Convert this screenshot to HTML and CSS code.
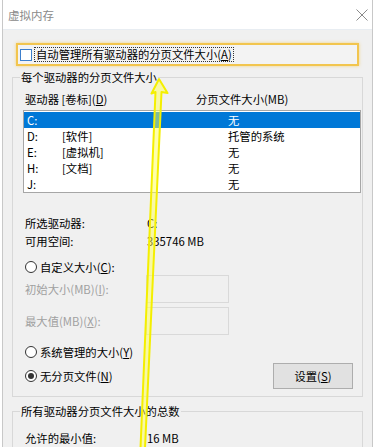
FILE: index.html
```html
<!DOCTYPE html>
<html lang="zh-CN">
<head>
    <meta charset="UTF-8">
    <title>虚拟内存</title>
    <link rel="stylesheet" href="styles.css">
</head>
<body>
<div class="window">
    <div class="titlebar">
        <span class="title">虚拟内存</span>
        <svg class="close" width="12" height="12" viewBox="0 0 12 12">
            <path d="M0.5 0.5 L11.5 11.5 M11.5 0.5 L0.5 11.5" stroke="#8a8a8a" stroke-width="1" fill="none"/>
        </svg>
    </div>

    <div class="content">
        <!-- auto manage checkbox (highlighted) -->
        <div class="auto-row">
            <span class="checkbox"></span>
            <span class="focus">自动管理所有驱动器的分页文件大小(<u>A</u>)</span>
        </div>

        <fieldset class="group">
            <legend>每个驱动器的分页文件大小</legend>
            <div class="list-head">
                <span class="head-drive">驱动器 [卷标](<u>D</u>)</span>
                <span>分页文件大小(MB)</span>
            </div>
            <div class="listbox">
                <div class="row selected"><span>C:</span><span></span><span>无</span></div>
                <div class="row"><span>D:</span><span>[软件]</span><span>托管的系统</span></div>
                <div class="row"><span>E:</span><span>[虚拟机]</span><span>无</span></div>
                <div class="row"><span>H:</span><span>[文档]</span><span>无</span></div>
                <div class="row"><span>J:</span><span></span><span>无</span></div>
            </div>

            <div class="info">
                <div class="info-row"><span class="info-label">所选驱动器:</span><span>C:</span></div>
                <div class="info-row"><span class="info-label">可用空间:</span><span>335746 MB</span></div>
            </div>

            <div class="radio-row custom"><span class="radio"></span>自定义大小(<u>C</u>):</div>
            <div class="field-row"><span class="field-label">初始大小(MB)(<u>I</u>):</span><span class="input"></span></div>
            <div class="field-row second"><span class="field-label">最大值(MB)(<u>X</u>):</span><span class="input"></span></div>
            <div class="radio-row system"><span class="radio"></span>系统管理的大小(<u>Y</u>)</div>
            <div class="radio-row none">
                <span class="radio checked"></span>无分页文件(<u>N</u>)
                <button class="set-btn">设置(<u>S</u>)</button>
            </div>
        </fieldset>

        <fieldset class="group total">
            <legend>所有驱动器分页文件大小的总数</legend>
            <div class="info-row"><span class="info-label">允许的最小值:</span><span>16 MB</span></div>
        </fieldset>
    </div>
</div>

<!-- yellow annotation arrow drawn over the dialog -->
<svg class="arrow" width="376" height="447" viewBox="0 0 376 447">
    <polygon points="159,79 151.5,93.5 155.5,92 140.5,448 145,448 161.5,92 167.5,93"
             fill="rgba(255,255,90,0.5)" stroke="#f4ef00" stroke-width="2" stroke-linejoin="round"/>
</svg>
</body>
</html>
```

FILE: styles.css
```css
* {
    box-sizing: border-box;
}

html, body {
    margin: 0;
    padding: 0;
    background: #fff;
    overflow: hidden;
}

body {
    font-family: "Noto Sans CJK SC", "Noto Sans", sans-serif;
    font-size: 11.33px;
    color: #000;
    width: 376px;
    height: 447px;
}

u {
    text-decoration: underline;
    text-underline-offset: 1px;
}

/* window frame */
.window {
    margin-left: 2px;
    width: 371px;
    height: 447px;
    overflow: hidden;
    border-left: 1px solid #c8c8c8;
    border-right: 1px solid #c8c8c8;
    background: #f0f0f0;
}

.titlebar {
    height: 30px;
    background: #fff;
    display: flex;
    align-items: center;
    justify-content: space-between;
    border-bottom: 1px solid #e8edf2;
}
.titlebar .title {
    padding-left: 5px;
    color: #8a8a8a;
    font-size: 11.5px;
    line-height: 14px;
}
.titlebar .close {
    margin-right: 4px;
}

.content {
    padding-top: 13px;
}

/* auto manage row */
.auto-row {
    margin-left: 13px;
    width: 343px;
    height: 23px;
    border: 2px solid #f2c54e;
    box-shadow: 0 0 3px rgba(245, 200, 80, 0.7);
    background: #f3f3f3;
    display: flex;
    align-items: center;
    padding-left: 2px;
}
.checkbox {
    width: 12px;
    height: 12px;
    border: 1px solid #3d7fcc;
    background: #fff;
    flex: none;
}
.focus {
    margin-left: 2px;
    border: 1px dotted #333;
    padding: 0 1px;
    line-height: 13px;
}

/* group boxes */
.group {
    margin: 4px 0 0 9px;
    width: 351px;
    border: 1px solid #d8d8d8;
    padding: 0 1px 7px 10px;
    min-inline-size: 0;
}
.group legend {
    padding: 0 1px;
    margin-left: -3px;
    line-height: 14px;
}

.list-head {
    margin-top: 8px;
    padding-left: 2px;
    line-height: 14px;
    display: flex;
}
.head-drive {
    width: 171px;
}

.listbox {
    margin-top: 4px;
    width: 338px;
    height: 83px;
    border: 1px solid #a6a6a6;
    background: #fff;
    padding-top: 1px;
}
.row {
    height: 16px;
    line-height: 16px;
    display: grid;
    grid-template-columns: 35px 166px 1fr;
    padding-left: 3px;
}
.row.selected {
    background: #0078d7;
    color: #fff;
}

.info {
    margin-top: 21px;
}
.info-row {
    display: flex;
    line-height: 18px;
    padding-left: 2px;
}
.info-label {
    width: 122px;
}

.radio-row {
    display: flex;
    align-items: center;
    padding-left: 2px;
    height: 16px;
}
.radio {
    width: 12px;
    height: 12px;
    border: 1px solid #333;
    border-radius: 50%;
    background: #fff;
    margin-right: 3px;
    flex: none;
    display: flex;
    align-items: center;
    justify-content: center;
}
.radio.checked::after {
    content: "";
    width: 6px;
    height: 6px;
    border-radius: 50%;
    background: #333;
}
.radio-row.custom {
    margin-top: 9px;
}
.radio-row.system {
    margin-top: 9px;
}
.radio-row.none {
    margin-top: 3px;
    height: 26px;
}

.field-row {
    display: flex;
    align-items: center;
    height: 28px;
    padding-left: 2px;
    color: #a0a0a0;
}
.field-row.second {
    margin-top: 4px;
}
.field-label {
    width: 121px;
}
.input {
    width: 83px;
    height: 28px;
    border: 1px solid #d9d9d9;
    background: #f0f0f0;
}

.set-btn {
    margin-left: auto;
    margin-right: 8px;
    width: 80px;
    height: 26px;
    background: #e1e1e1;
    border: 1px solid #adadad;
    font-family: inherit;
    font-size: 11.33px;
    color: #000;
    padding: 0;
}

.group.total {
    margin-top: 7px;
    padding-bottom: 0;
}
.group.total .info-row {
    margin-top: 11px;
}

.arrow {
    position: absolute;
    top: 0;
    left: 0;
    pointer-events: none;
}
```
